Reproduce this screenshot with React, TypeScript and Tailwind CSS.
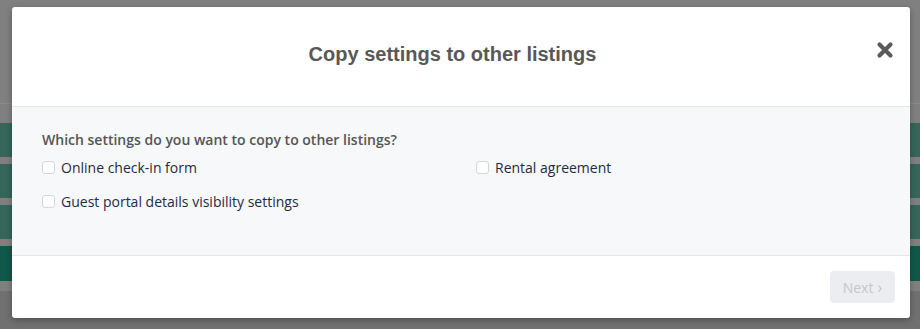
const options = [
  { id: 'checkin', label: 'Online check-in form' },
  { id: 'rental', label: 'Rental agreement' },
  { id: 'portal', label: 'Guest portal details visibility settings' },
];

function Checkbox({ label }: { label: string }) {
  return (
    <label className="flex items-center gap-[6px] h-[20px] mb-[14px] cursor-pointer">
      <span className="w-[13px] h-[13px] rounded-[3px] border border-[#d3d6dc] bg-white shrink-0" />
      <span className="text-[14px] text-[#1f2b45]">{label}</span>
    </label>
  );
}

export default function App() {
  return (
    <div className="relative w-[920px] h-[329px] overflow-hidden bg-[#808080]">
      {/* page behind the backdrop */}
      <div className="h-[103px]" />
      <div className="h-px bg-[#8b8b8b]" />
      <div className="h-[19px]" />
      <div className="flex flex-col gap-[7px]">
        <div className="h-[34px] bg-[#356659]" />
        <div className="h-[34px] bg-[#356659]" />
        <div className="h-[34px] bg-[#356659]" />
        <div className="h-[35px] bg-[#10584a]" />
      </div>
      <div className="h-[10px]" />
      <div className="h-[60px] bg-[#707070]" />

      {/* modal */}
      <div
        className="absolute left-[12px] top-[7px] w-[898px] bg-white rounded-[3px] shadow-[0_2px_6px_rgba(0,0,0,0.3)] overflow-hidden"
        style={{ fontFamily: '"Open Sans", sans-serif' }}
      >
        <div className="relative h-[100px] flex items-center justify-center border-b border-[#e3e5e8] pb-[5px] pr-[17px]">
          <h2
            className="text-[20px] font-bold text-[#585858]"
            style={{ fontFamily: '"Liberation Sans", Arial, sans-serif' }}
          >
            Copy settings to other listings
          </h2>
          <button className="absolute right-[16px] top-[34px] text-[#5a5a5a]">
            <svg width="18" height="18" viewBox="0 0 18 18">
              <path d="M3.5 3.5 L14.5 14.5 M14.5 3.5 L3.5 14.5" stroke="currentColor" strokeWidth="4.2" strokeLinecap="round" />
            </svg>
          </button>
        </div>

        <div className="h-[149px] bg-[#f7f8fa] border-b border-[#e3e5e8] pt-[23px] px-[30px]">
          <p className="text-[14px] font-semibold text-[#555555] leading-[20px] mb-[7px]">
            Which settings do you want to copy to other listings?
          </p>
          <div className="grid grid-cols-2 gap-x-[30px]">
            {options.map((o) => (
              <Checkbox key={o.id} label={o.label} />
            ))}
          </div>
        </div>

        <div className="h-[62px] flex items-center justify-end px-[15px]">
          <button
            disabled
            className="w-[65px] h-[32px] rounded-[4px] bg-[#ebedf0] text-[14px] text-[#c3c6cd] flex items-center justify-center gap-[4px]"
          >
            Next <span className="text-[16px] leading-none">›</span>
          </button>
        </div>
      </div>
    </div>
  );
}
